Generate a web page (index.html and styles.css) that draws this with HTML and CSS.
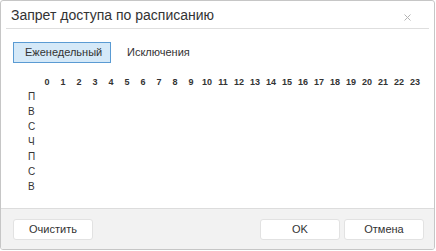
FILE: index.html
```html
<!DOCTYPE html>
<html lang="ru">

<head>
    <meta charset="UTF-8">
    <title>Запрет доступа по расписанию</title>
    <link rel="stylesheet" href="styles.css">
</head>

<body>
    <div class="dialog">
        <div class="dialog-header">
            <span class="dialog-title">Запрет доступа по расписанию</span>
            <svg class="close-btn" width="7" height="7" viewBox="0 0 7 7">
                <path d="M0.5 0.5 L6.5 6.5 M6.5 0.5 L0.5 6.5" stroke="#b4b4b4" stroke-width="1" fill="none" />
            </svg>
        </div>

        <div class="dialog-body">
            <div class="tabs">
                <div class="tab active">Еженедельный</div>
                <div class="tab">Исключения</div>
            </div>

            <div class="schedule" id="schedule"></div>
        </div>

        <div class="dialog-footer">
            <button class="btn">Очистить</button>
            <div class="footer-right">
                <button class="btn">OK</button>
                <button class="btn">Отмена</button>
            </div>
        </div>
    </div>

    <script>
        // hours header + one row per weekday
        var days = ['П', 'В', 'С', 'Ч', 'П', 'С', 'В'];
        var schedule = document.getElementById('schedule');

        var head = document.createElement('div');
        head.className = 'row hours';
        head.appendChild(document.createElement('span')).className = 'day';
        for (var h = 0; h < 24; h++) {
            var cell = document.createElement('span');
            cell.className = 'cell';
            cell.innerText = h;
            head.appendChild(cell);
        }
        schedule.appendChild(head);

        for (var i = 0; i < days.length; i++) {
            var row = document.createElement('div');
            row.className = 'row';
            var label = document.createElement('span');
            label.className = 'day';
            label.innerText = days[i];
            row.appendChild(label);
            schedule.appendChild(row);
        }
    </script>
</body>

</html>
```

FILE: styles.css
```css
body {
    margin: 0;
    padding: 0;
    font-family: "Liberation Sans", Arial, sans-serif;
    color: #333;
    background-color: #fff;
}

.dialog {
    width: 433px;
    height: 248px;
    border: 1px solid #c6c6c6;
    border-radius: 3px;
    display: flex;
    flex-direction: column;
    overflow: hidden;
}

.dialog-header {
    height: 27px;
    margin: 0 5px;
    padding: 0 5px;
    border-bottom: 1px solid #dedede;
    display: flex;
    align-items: center;
    justify-content: space-between;
}

.dialog-title {
    font-size: 14px;
    color: #333;
    padding-top: 1px;
}

.close-btn {
    margin-right: 13px;
    margin-top: 5px;
}

.dialog-body {
    flex: 1;
    padding: 13px 12px 0 12px;
}

.tabs {
    display: flex;
    align-items: center;
}

.tab {
    font-size: 11px;
    height: 19px;
    line-height: 19px;
    padding: 0 11px;
    border: 1px solid transparent;
    margin-right: 4px;
}

.tab.active {
    background-color: #d5e9f8;
    border-color: #5a9bd3;
    width: 74px;
}

.schedule {
    margin-top: 14px;
}

.row {
    display: flex;
    height: 15px;
    align-items: center;
}

.row.hours {
    height: 10px;
    margin-bottom: 2px;
}

.day {
    flex: 0 0 11px;
    padding-left: 15px;
    font-size: 10px;
}

.cell {
    flex: 0 0 16px;
    text-align: center;
    font-size: 9px;
    font-weight: bold;
    color: #333;
}

.dialog-footer {
    height: 40px;
    border-top: 1px solid #dcdcdc;
    background-color: #f2f2f2;
    display: flex;
    align-items: center;
    justify-content: space-between;
    padding: 0 10px 0 12px;
}

.footer-right {
    display: flex;
    gap: 4px;
}

.btn {
    width: 80px;
    height: 21px;
    font-family: "Liberation Sans", Arial, sans-serif;
    font-size: 11px;
    color: #333;
    background-color: #fff;
    border: 1px solid #e2e2e2;
    border-radius: 3px;
    padding: 0;
}
```
